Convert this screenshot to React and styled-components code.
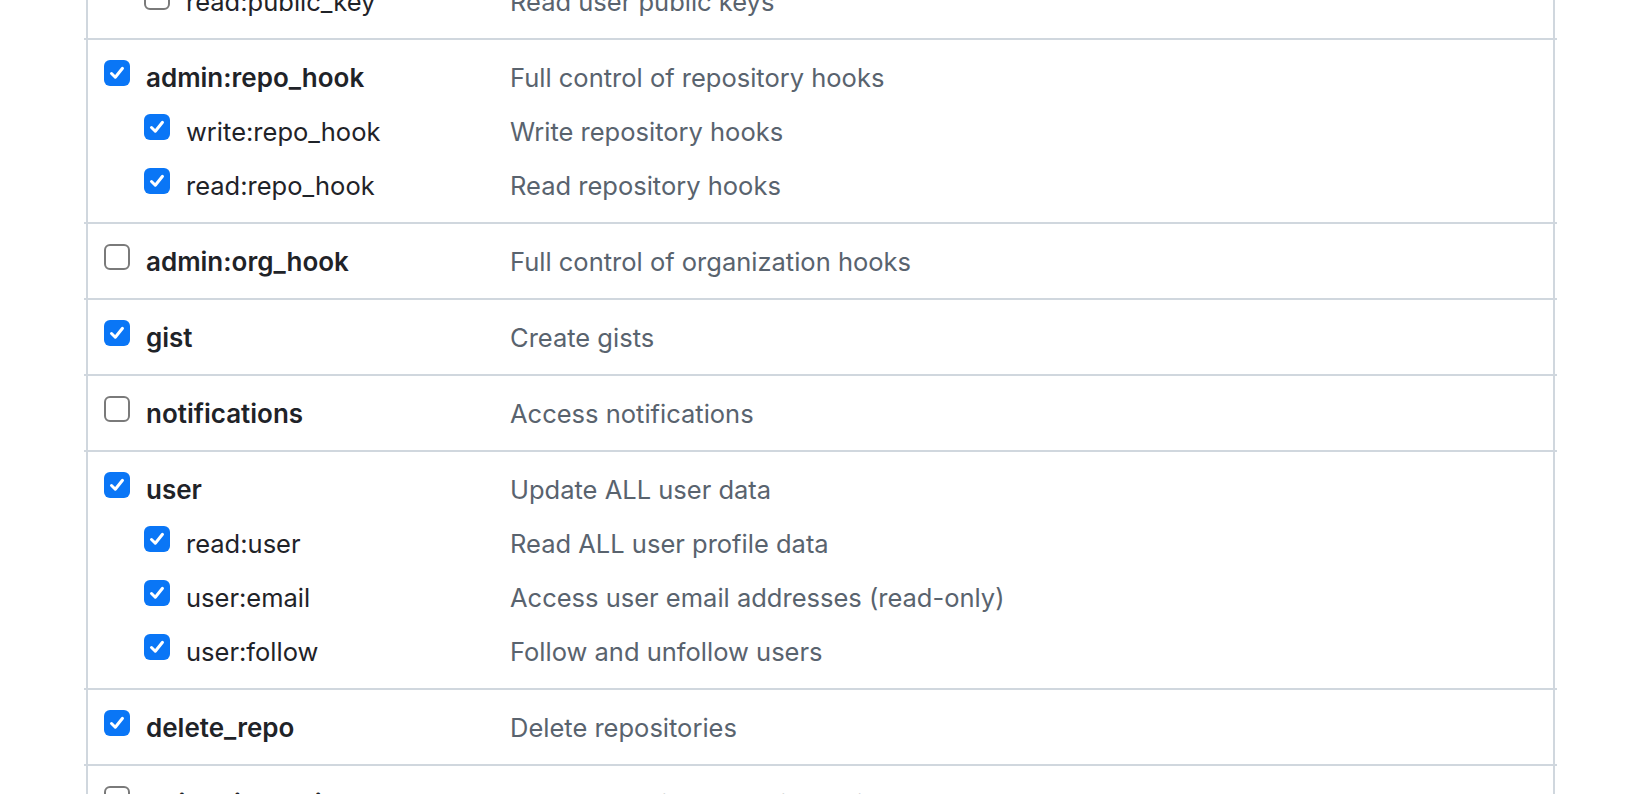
import React from 'react';
import styled, { createGlobalStyle } from 'styled-components';

const GlobalStyle = createGlobalStyle`
  html, body {
    margin: 0;
    padding: 0;
    background: #ffffff;
    overflow: hidden;
  }
  body {
    font-family: Inter, "Liberation Sans", Arial, sans-serif;
    color: #1f2328;
  }
`;

// Whole scope list
const Panel = styled.div`
  margin: -146px 0 0 84px;
  width: 1473px;
  display: flex;
  flex-direction: column;
`;

// One group: a top scope and its sub scopes
const Group = styled.div`
  border-top: 2px solid #d0d7de;
  padding: 10px 0;
  position: relative;
  display: flex;
  flex-direction: column;

  // side borders sit a little inside the row lines
  &::before,
  &::after {
    content: '';
    position: absolute;
    top: -2px;
    bottom: 0;
    width: 2px;
    background: #d0d7de;
  }
  &::before { left: 2px; }
  &::after { right: 2px; }
`;

const Line = styled.label`
  height: 54px;
  display: grid;
  grid-template-columns: 406px 1fr;
  align-items: center;
  padding-left: 20px;
`;

const Scope = styled.span`
  display: flex;
  align-items: center;
  gap: 16px;
  padding-left: ${p => (p.$sub ? '40px' : '0')};
  font-size: ${p => (p.$sub ? '25.5px' : '26px')};
  font-weight: ${p => (p.$sub ? 400 : 600)};
  color: #1f2328;
  white-space: nowrap;
`;

const Box = styled.span`
  width: 26px;
  height: 26px;
  box-sizing: border-box;
  border-radius: 6px;
  flex-shrink: 0;
  margin-top: -9px;
  display: flex;
  align-items: center;
  justify-content: center;
  background: ${p => (p.$on ? '#0a76f6' : '#ffffff')};
  border: ${p => (p.$on ? 'none' : '2px solid #7a7a7a')};
`;

const Desc = styled.span`
  font-size: 25.5px;
  color: #59636e;
  white-space: nowrap;
`;

const Check = () => (
  <svg width="18" height="18" viewBox="0 0 18 18">
    <path d="M3.5 9.5 L7.3 13.2 L14.5 4.3" fill="none" stroke="#fff" strokeWidth="3" strokeLinecap="round" strokeLinejoin="round" />
  </svg>
);

const CheckBox = ({ on }) => <Box $on={on}>{on && <Check />}</Box>;

const scopes = [
  {
    name: 'admin:public_key', desc: 'Full control of user public keys', on: false,
    subs: [
      { name: 'write:public_key', desc: 'Write user public keys', on: false },
      { name: 'read:public_key', desc: 'Read user public keys', on: false },
    ],
  },
  {
    name: 'admin:repo_hook', desc: 'Full control of repository hooks', on: true,
    subs: [
      { name: 'write:repo_hook', desc: 'Write repository hooks', on: true },
      { name: 'read:repo_hook', desc: 'Read repository hooks', on: true },
    ],
  },
  { name: 'admin:org_hook', desc: 'Full control of organization hooks', on: false, subs: [] },
  { name: 'gist', desc: 'Create gists', on: true, subs: [] },
  { name: 'notifications', desc: 'Access notifications', on: false, subs: [] },
  {
    name: 'user', desc: 'Update ALL user data', on: true,
    subs: [
      { name: 'read:user', desc: 'Read ALL user profile data', on: true },
      { name: 'user:email', desc: 'Access user email addresses (read-only)', on: true },
      { name: 'user:follow', desc: 'Follow and unfollow users', on: true },
    ],
  },
  { name: 'delete_repo', desc: 'Delete repositories', on: true, subs: [] },
  {
    name: 'write:discussion', desc: 'Read and write team discussions', on: false,
    subs: [{ name: 'read:discussion', desc: 'Read team discussions', on: false }],
  },
];

export default function App() {
  return (
    <>
      <GlobalStyle />
      <Panel>
        {scopes.map(s => (
          <Group key={s.name}>
            <Line>
              <Scope>
                <CheckBox on={s.on} />
                {s.name}
              </Scope>
              <Desc>{s.desc}</Desc>
            </Line>
            {s.subs.map(sub => (
              <Line key={sub.name}>
                <Scope $sub>
                  <CheckBox on={sub.on} />
                  {sub.name}
                </Scope>
                <Desc>{sub.desc}</Desc>
              </Line>
            ))}
          </Group>
        ))}
      </Panel>
    </>
  );
}
